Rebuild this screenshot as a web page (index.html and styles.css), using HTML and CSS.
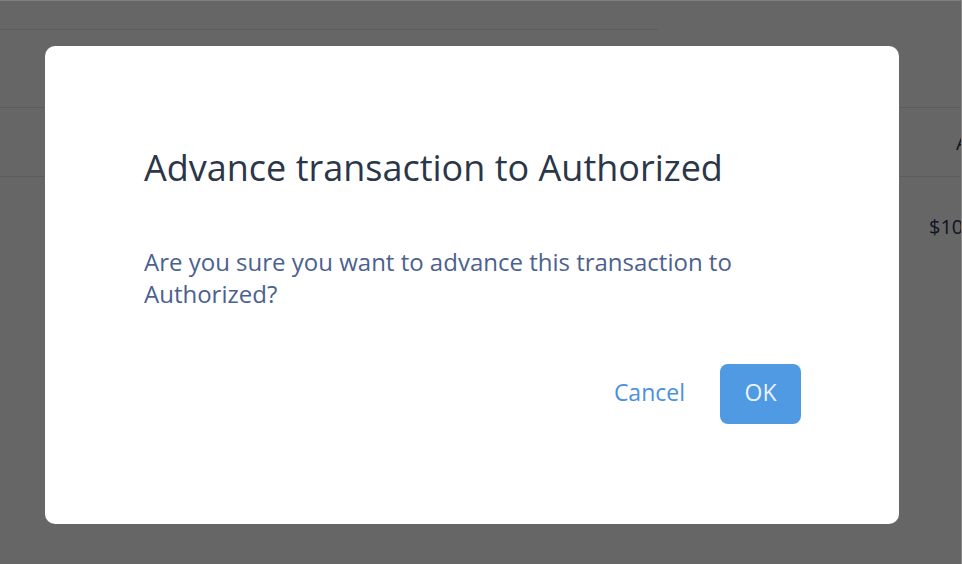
FILE: index.html
```html
<!DOCTYPE html>
<html lang="en">
<head>
<meta charset="utf-8">
<title>Advance transaction</title>
<link rel="stylesheet" href="styles.css">
</head>
<body>
<div class="page">
  <div class="topbar"></div>
  <div class="table">
    <div class="row head-row">
      <div class="cell spacer"></div>
      <div class="cell head">Amount</div>
    </div>
    <div class="row body-row">
      <div class="cell spacer2"></div>
      <div class="cell amount">$100.00</div>
    </div>
  </div>
</div>
<div class="overlay">
  <div class="dialog" role="dialog" aria-labelledby="dlg-title">
    <h2 class="dialog-title" id="dlg-title">Advance transaction to Authorized</h2>
    <p class="dialog-text">Are you sure you want to advance this transaction to Authorized?</p>
    <div class="dialog-actions">
      <button class="btn btn-link" type="button">Cancel</button>
      <button class="btn btn-primary" type="button">OK</button>
    </div>
  </div>
</div>
</body>
</html>
```
FILE: styles.css
```css
* { box-sizing: border-box; }
html, body { margin: 0; padding: 0; }
body {
  width: 962px;
  height: 564px;
  overflow: hidden;
  background: #ffffff;
  font-family: "Open Sans", "Noto Sans", sans-serif;
}
.page {
  width: 962px;
  overflow: hidden;
}
.topbar {
  margin-top: 29px;
  width: 658px;
  height: 1px;
  background: #e6e6e6;
}
.table {
  margin-top: 77px;
}
.row {
  display: flex;
  white-space: nowrap;
  border-bottom: 1px solid #e6e6e6;
}
.head-row {
  border-top: 1px solid #e6e6e6;
  height: 70px;
  align-items: center;
}
.body-row {
  height: 100px;
  padding-top: 36px;
  border-bottom: none;
}
.spacer { flex: 0 0 956px; }
.spacer2 { flex: 0 0 929px; }
.cell {
  font-size: 20px;
  color: #2b3550;
}
.overlay {
  position: fixed;
  inset: 0;
  background: rgba(0, 0, 0, 0.6);
  border-top: 1px solid #7e7e7e;
  border-right: 1px solid #8a8a8a;
  display: flex;
  align-items: flex-start;
  padding: 45px 0 0 45px;
}
.dialog {
  width: 854px;
  height: 478px;
  background: #ffffff;
  border-radius: 10px;
  padding: 98px 98px 100px 99px;
  display: flex;
  flex-direction: column;
}
.dialog-title {
  margin: 0;
  font-size: 36px;
  font-weight: 400;
  line-height: 48px;
  color: #2b3648;
}
.dialog-text {
  margin: 54px 0 0;
  font-size: 24px;
  line-height: 32px;
  color: #4c6190;
}
.dialog-actions {
  margin-top: auto;
  display: flex;
  justify-content: flex-end;
  align-items: center;
  gap: 35px;
}
.btn {
  font-family: inherit;
  font-size: 23px;
  border: none;
  cursor: pointer;
}
.btn-link {
  background: none;
  color: #4a90e2;
  padding: 0 0 4px;
}
.btn-primary {
  width: 81px;
  height: 60px;
  padding: 0 0 4px;
  border-radius: 8px;
  background: #4f9ae3;
  color: #eaf3fc;
}
```
